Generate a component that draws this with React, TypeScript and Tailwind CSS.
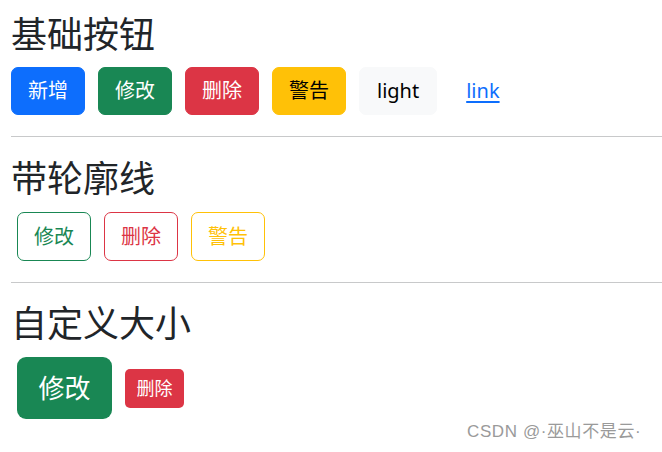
import React from 'react';

const cjk = "font-['Noto_Sans','Noto_Sans_CJK_SC',sans-serif]";

const solid: { label: string; cls: string }[] = [
  { label: '新增', cls: 'px-4 bg-[#0d6efd] border-[#0d6efd] text-white' },
  { label: '修改', cls: 'px-4 bg-[#198754] border-[#198754] text-white' },
  { label: '删除', cls: 'px-4 bg-[#dc3545] border-[#dc3545] text-white' },
  { label: '警告', cls: 'px-4 bg-[#ffc107] border-[#ffc107] text-black' },
  { label: 'light', cls: 'px-[17px] bg-[#f8f9fa] border-[#f8f9fa] text-black' },
];

const outline: { label: string; cls: string }[] = [
  { label: '修改', cls: 'border-[#198754] text-[#198754]' },
  { label: '删除', cls: 'border-[#dc3545] text-[#dc3545]' },
  { label: '警告', cls: 'border-[#ffc107] text-[#ffc107]' },
];

const Title: React.FC<{ children: React.ReactNode }> = ({ children }) => (
  <h2 className="text-[36px] leading-[43px] font-normal text-[#212529]">{children}</h2>
);

const Rule = () => <div className="h-px bg-[#c8c9ca] ml-[11px]" />;

export default function App() {
  return (
    <div className={`relative w-[662px] h-[452px] bg-white overflow-hidden ${cjk}`}>
      {/* 基础按钮 */}
      <div className="pl-[11px] pt-[13px]">
        <Title>基础按钮</Title>
        <div className="flex gap-[13px] mt-[11px]">
          {solid.map((b) => (
            <button
              key={b.label}
              className={`h-[48px] border rounded-[7px] text-[20px] leading-none ${b.cls}`}
            >
              {b.label}
            </button>
          ))}
          <button className="h-[48px] px-4 text-[20px] leading-none text-[#0d6efd] underline underline-offset-[3px]">
            link
          </button>
        </div>
      </div>
      <div className="mt-[21px]">
        <Rule />
      </div>

      {/* 带轮廓线 */}
      <div className="pl-[11px] pt-[20px]">
        <Title>带轮廓线</Title>
        <div className="flex gap-[13px] mt-[12px] pl-[6px]">
          {outline.map((b) => (
            <button
              key={b.label}
              className={`h-[49px] px-4 border bg-white rounded-[7px] text-[20px] leading-none ${b.cls}`}
            >
              {b.label}
            </button>
          ))}
        </div>
      </div>
      <div className="mt-[21px]">
        <Rule />
      </div>

      {/* 自定义大小 */}
      <div className="pl-[11px] pt-[19px]">
        <Title>自定义大小</Title>
        <div className="flex items-center gap-[13px] mt-[12px] pl-[6px]">
          <button className="h-[62px] px-[21.5px] rounded-[9px] bg-[#198754] text-white text-[26px] leading-none">
            修改
          </button>
          <button className="h-[39px] px-[11.5px] rounded-[5px] bg-[#dc3545] text-white text-[18px] leading-none">
            删除
          </button>
        </div>
      </div>

      <div className="absolute left-[467px] top-[420px] text-[17px] leading-[24px] text-[#9a9a9a] tracking-[0.6px] font-['Liberation_Sans','Noto_Sans_CJK_SC',sans-serif]">
        CSDN @·巫山不是云·
      </div>
    </div>
  );
}
